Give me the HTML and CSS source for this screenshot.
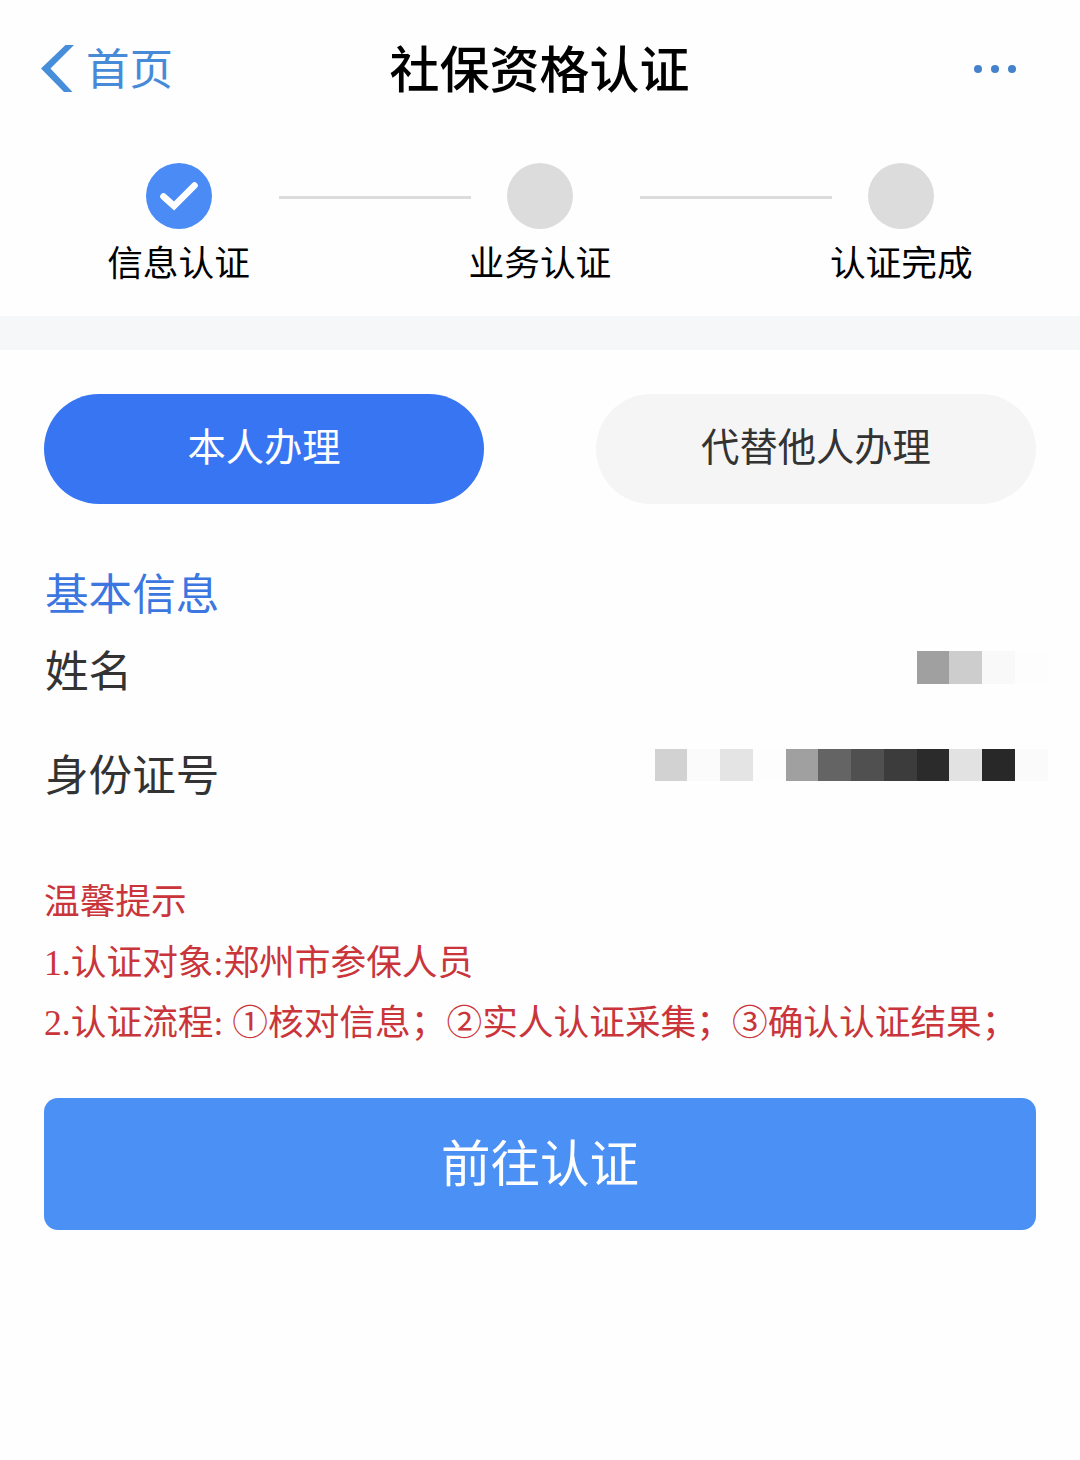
FILE: index.html
```html
<!DOCTYPE html>
<html lang="zh-CN">
<head>
<meta charset="utf-8">
<title>社保资格认证</title>
<link rel="stylesheet" href="styles.css">
</head>
<body>
<header class="nav">
  <a class="nav-back">
    <svg class="chevron" width="34" height="48" viewBox="0 0 34 48"><path d="M24.5 0H33L9.5 23.5L31.5 47H23L0 23.5Z" fill="#468dda"/></svg>
    <span class="nav-back-text">首页</span>
  </a>
  <h1 class="nav-title">社保资格认证</h1>
  <div class="nav-more"><i class="dot"></i><i class="dot"></i><i class="dot"></i></div>
</header>
<section class="steps">
  <div class="step">
    <div class="step-icon step-icon-done">
      <svg width="66" height="66" viewBox="0 0 66 66"><path d="M17.5 33.5L28 43L48.5 22.5" fill="none" stroke="#fff" stroke-width="6.6" stroke-linecap="round" stroke-linejoin="miter"/></svg>
    </div>
    <span class="step-label">信息认证</span>
  </div>
  <div class="step-line"></div>
  <div class="step">
    <div class="step-icon"></div>
    <span class="step-label">业务认证</span>
  </div>
  <div class="step-line"></div>
  <div class="step">
    <div class="step-icon"></div>
    <span class="step-label">认证完成</span>
  </div>
</section>
<div class="divider"></div>
<main class="content">
  <div class="tabs">
    <button class="tab tab-active">本人办理</button>
    <button class="tab">代替他人办理</button>
  </div>
  <h2 class="section-title">基本信息</h2>
  <div class="row row-name">
    <span>姓名</span>
    <div class="mask">
      <i class="cell c-a0"></i><i class="cell c-cd"></i><i class="cell c-f9"></i><i class="cell c-fd"></i>
    </div>
  </div>
  <div class="row row-id">
    <span>身份证号</span>
    <div class="mask">
      <i class="cell c-d2"></i><i class="cell c-fb"></i><i class="cell c-e4"></i><i class="cell c-fd"></i><i class="cell c-a0"></i><i class="cell c-64"></i><i class="cell c-50"></i><i class="cell c-3c"></i><i class="cell c-2b"></i><i class="cell c-e2"></i><i class="cell c-28"></i><i class="cell c-fa"></i>
    </div>
  </div>
  <div class="tips">
    <p>温馨提示</p>
    <p>1.认证对象:郑州市参保人员</p>
    <p>2.认证流程: ①核对信息；②实人认证采集；③确认认证结果；</p>
  </div>
  <button class="submit">前往认证</button>
</main>
</body>
</html>
```
FILE: styles.css
```css
* { box-sizing: border-box; margin: 0; padding: 0; }
body {
  width: 1080px;
  min-height: 1460px;
  background: #fefefe;
  color: #333;
  font-family: "Noto Sans CJK SC", sans-serif;
}
button { border: 0; font-family: inherit; font-weight: 400; }

.nav {
  display: grid;
  grid-template-columns: 1fr auto 1fr;
  align-items: center;
  height: 138px;
  padding: 0 64px 0 41px;
}
.nav-back {
  display: flex;
  align-items: center;
  gap: 11px;
  color: #468ad8;
  font-size: 43.5px;
  line-height: 60px;
}
.nav-back-text { padding-bottom: 4px; }
.chevron { display: block; }
.nav-title {
  margin-left: 22px;
  padding-bottom: 7px;
  color: #000;
  font-size: 50px;
  font-weight: 500;
  line-height: 70px;
}
.nav-more { display: flex; justify-content: flex-end; gap: 9px; }
.dot { width: 8px; height: 8px; border-radius: 50%; background: #4482cb; }

.steps {
  display: flex;
  height: 178px;
  padding: 25px 0 0 107px;
}
.step {
  display: flex;
  flex-direction: column;
  align-items: center;
  width: 143px;
}
.step-icon {
  width: 66px;
  height: 66px;
  border-radius: 50%;
  background: #dcdcdc;
}
.step-icon-done { background: #4a8bf6; }
.step-icon svg { display: block; }
.step-label {
  margin-top: 6px;
  color: #000;
  font-size: 35.7px;
  line-height: 52px;
  white-space: nowrap;
}
.step-line {
  width: 192px;
  height: 3px;
  margin: 33px -2.6px 0 29px;
  background: #dcdcdc;
}
.divider { height: 34px; background: #f5f7f9; }

.content { padding: 44px 44px 0; }
.tabs { display: flex; justify-content: space-between; }
.tab {
  width: 440px;
  height: 110px;
  padding-bottom: 10px;
  border-radius: 55px;
  background: #f5f5f5;
  color: #333;
  font-size: 38.3px;
}
.tab-active { background: #3875f3; color: #fff; }
.section-title {
  margin: 55px 0 0 1px;
  color: #3c76e0;
  font-size: 43.6px;
  font-weight: 400;
  line-height: 64px;
}
.row {
  display: flex;
  justify-content: space-between;
  margin: 0 -11.5px 0 1px;
  font-size: 43.6px;
  line-height: 64px;
}
.row-name { margin-top: 13px; }
.row-id { margin-top: 40px; }
.mask { display: flex; margin-top: 15px; }
.row-id .mask { margin-top: 9px; }
.cell { width: 32.75px; height: 33px; }
.row-id .cell { height: 32px; }
.c-28 { background: #282828; }
.c-2b { background: #2b2b2b; }
.c-3c { background: #3c3c3c; }
.c-50 { background: #505050; }
.c-64 { background: #646464; }
.c-a0 { background: #a0a0a0; }
.c-cd { background: #cdcdcd; }
.c-d2 { background: #d2d2d2; }
.c-e2 { background: #e2e2e2; }
.c-e4 { background: #e4e4e4; }
.c-f9 { background: #f9f9f9; }
.c-fa { background: #fafafa; }
.c-fb { background: #fbfbfb; }
.c-fd { background: #fdfdfd; }

.tips {
  margin-top: 68px;
  color: #c9353a;
  font-family: "Liberation Serif", "Noto Sans CJK SC", serif;
  font-size: 35.7px;
  line-height: 60.5px;
  white-space: nowrap;
}
.submit {
  display: block;
  width: 992px;
  height: 132px;
  margin-top: 44px;
  padding-bottom: 7px;
  border-radius: 14px;
  background: #4a90f5;
  color: #fff;
  font-size: 49.5px;
}
```
